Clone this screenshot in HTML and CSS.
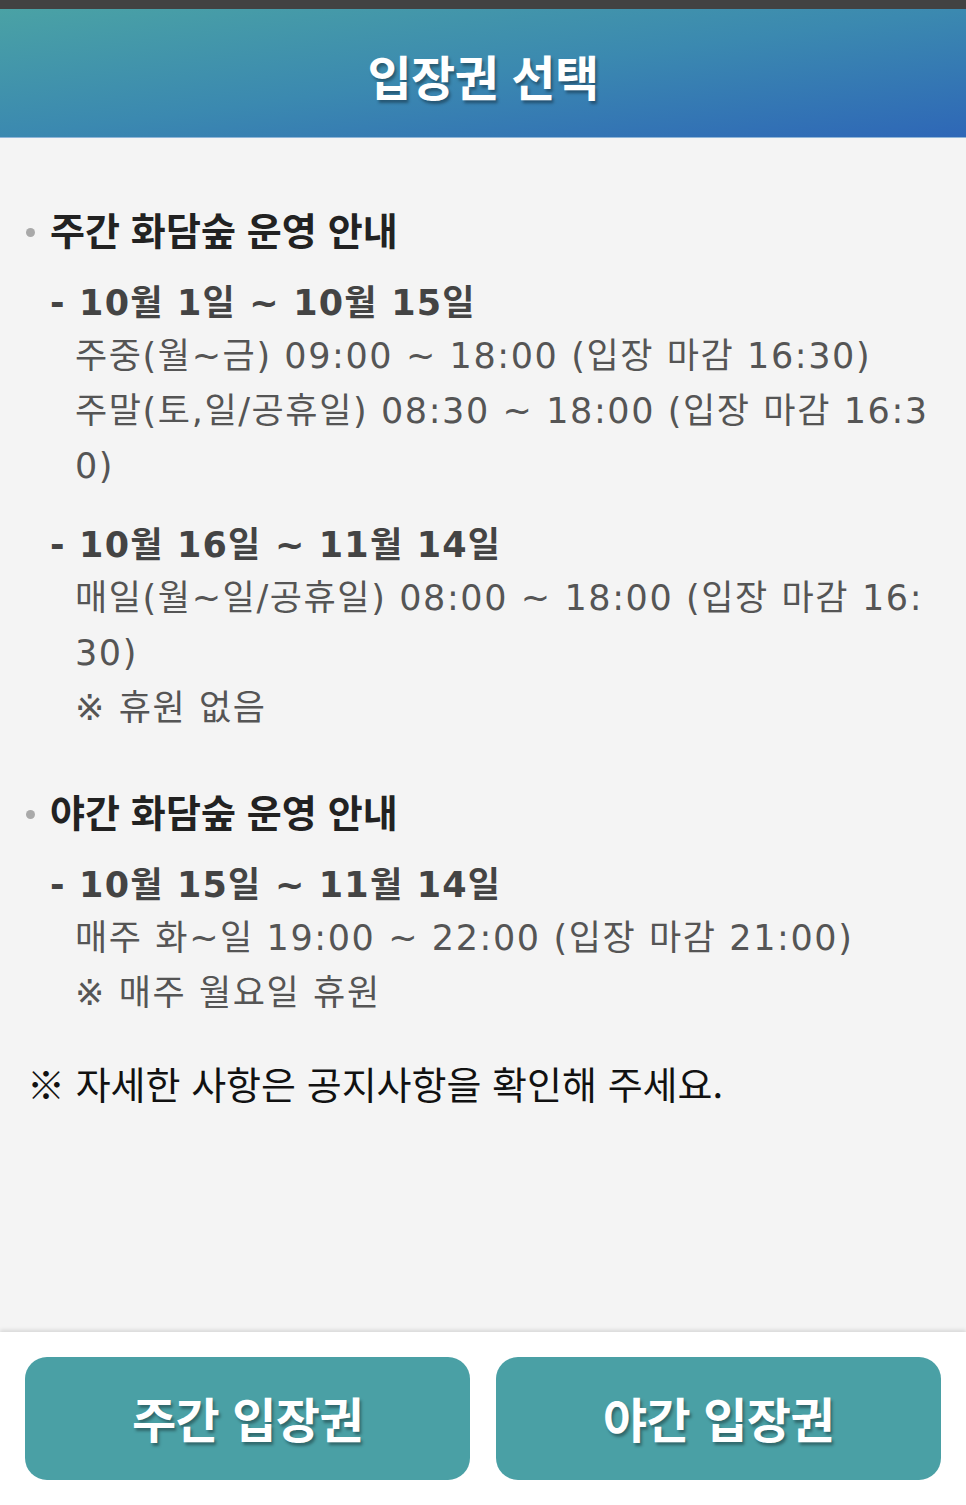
FILE: index.html
```html
<!DOCTYPE html>
<html lang="ko">
<head>
<meta charset="utf-8">
<link rel="stylesheet" href="styles.css">
</head>
<body>
<div class="page">
  <div class="topbar"></div>
  <header class="header"><h1 class="title">입장권 선택</h1></header>
  <main class="content">
    <section class="block">
      <h2 class="heading"><span class="dot"></span>주간 화담숲 운영 안내</h2>
      <div class="period">
        <p class="date">- 10월 1일 ~ 10월 15일</p>
        <p class="line">주중(월~금) 09:00 ~ 18:00 (입장 마감 16:30)</p>
        <p class="line">주말(토,일/공휴일) 08:30 ~ 18:00 (입장 마감 16:30)</p>
      </div>
      <div class="period">
        <p class="date">- 10월 16일 ~ 11월 14일</p>
        <p class="line">매일(월~일/공휴일) 08:00 ~ 18:00 (입장 마감 16:30)</p>
        <p class="line">※ 휴원 없음</p>
      </div>
    </section>
    <section class="block">
      <h2 class="heading"><span class="dot"></span>야간 화담숲 운영 안내</h2>
      <div class="period">
        <p class="date">- 10월 15일 ~ 11월 14일</p>
        <p class="line">매주 화~일 19:00 ~ 22:00 (입장 마감 21:00)</p>
        <p class="line">※ 매주 월요일 휴원</p>
      </div>
    </section>
    <p class="notice">※ 자세한 사항은 공지사항을 확인해 주세요.</p>
  </main>
  <footer class="footer">
    <button class="btn">주간 입장권</button>
    <button class="btn">야간 입장권</button>
  </footer>
</div>
</body>
</html>
```
FILE: styles.css
```css
* { box-sizing: border-box; }
html, body { margin: 0; padding: 0; }
body {
  width: 966px;
  height: 1505px;
  background: #f4f4f4;
  font-family: "DejaVu Sans", "Noto Sans CJK KR", sans-serif;
  overflow: hidden;
}
.page {
  display: flex;
  flex-direction: column;
  height: 1505px;
}
.topbar {
  height: 9px;
  background: #424242;
  flex: none;
}
.header {
  height: 129px;
  flex: none;
  display: flex;
  align-items: center;
  justify-content: center;
  background: linear-gradient(to bottom right, #4aa2a5 0%, #3b89b0 50%, #2e67b7 100%);
  border-bottom: 1px solid #8fb5d8;
}
.title {
  margin: 0;
  padding-top: 4px;
  color: #fff;
  font-family: "Noto Sans CJK KR", sans-serif;
  font-weight: 700;
  font-size: 48px;
  letter-spacing: -0.5px;
  text-shadow: 2px 3px 3px rgba(0,0,0,0.35);
}
.content {
  flex: 1;
  padding: 65px 30px 0 25px;
}
.block { margin-bottom: 49px; }
.block:last-of-type { margin-bottom: 36px; }
.heading {
  margin: 0;
  display: flex;
  align-items: center;
  font-family: "Noto Sans CJK KR", sans-serif;
  font-weight: 700;
  font-size: 38px;
  letter-spacing: 0.1px;
  line-height: 52px;
  color: #222;
}
.dot {
  width: 9px;
  height: 9px;
  border-radius: 50%;
  background: #a9a9a9;
  margin: 6px 15px 0 1px;
}
.period {
  padding-left: 25px;
  margin-top: 22px;
}
.period + .period { margin-top: 25px; }
.date {
  margin: 0;
  font-weight: 700;
  font-size: 35px;
  letter-spacing: 1.2px;
  line-height: 52px;
  color: #444;
}
.line {
  margin: 0;
  padding-left: 25px;
  font-size: 35px;
  letter-spacing: 1.6px;
  line-height: 55px;
  color: #555;
  word-break: break-all;
}
.notice {
  margin: 0;
  padding-left: 2px;
  font-family: "Noto Sans CJK KR", sans-serif;
  font-size: 38px;
  line-height: 52px;
  color: #111;
}
.footer {
  flex: none;
  height: 173px;
  background: #fff;
  box-shadow: 0 -2px 4px rgba(0,0,0,0.12);
  display: flex;
  gap: 26px;
  padding: 25px 25px 25px 25px;
}
.btn {
  flex: 1;
  height: 123px;
  border: none;
  border-radius: 22px;
  background: #4aa0a5;
  color: #fff;
  font-family: "Noto Sans CJK KR", sans-serif;
  font-weight: 700;
  font-size: 48px;
  letter-spacing: -0.5px;
  text-shadow: 2px 3px 3px rgba(0,0,0,0.35);
  padding: 0 0 4px 0;
}
```
